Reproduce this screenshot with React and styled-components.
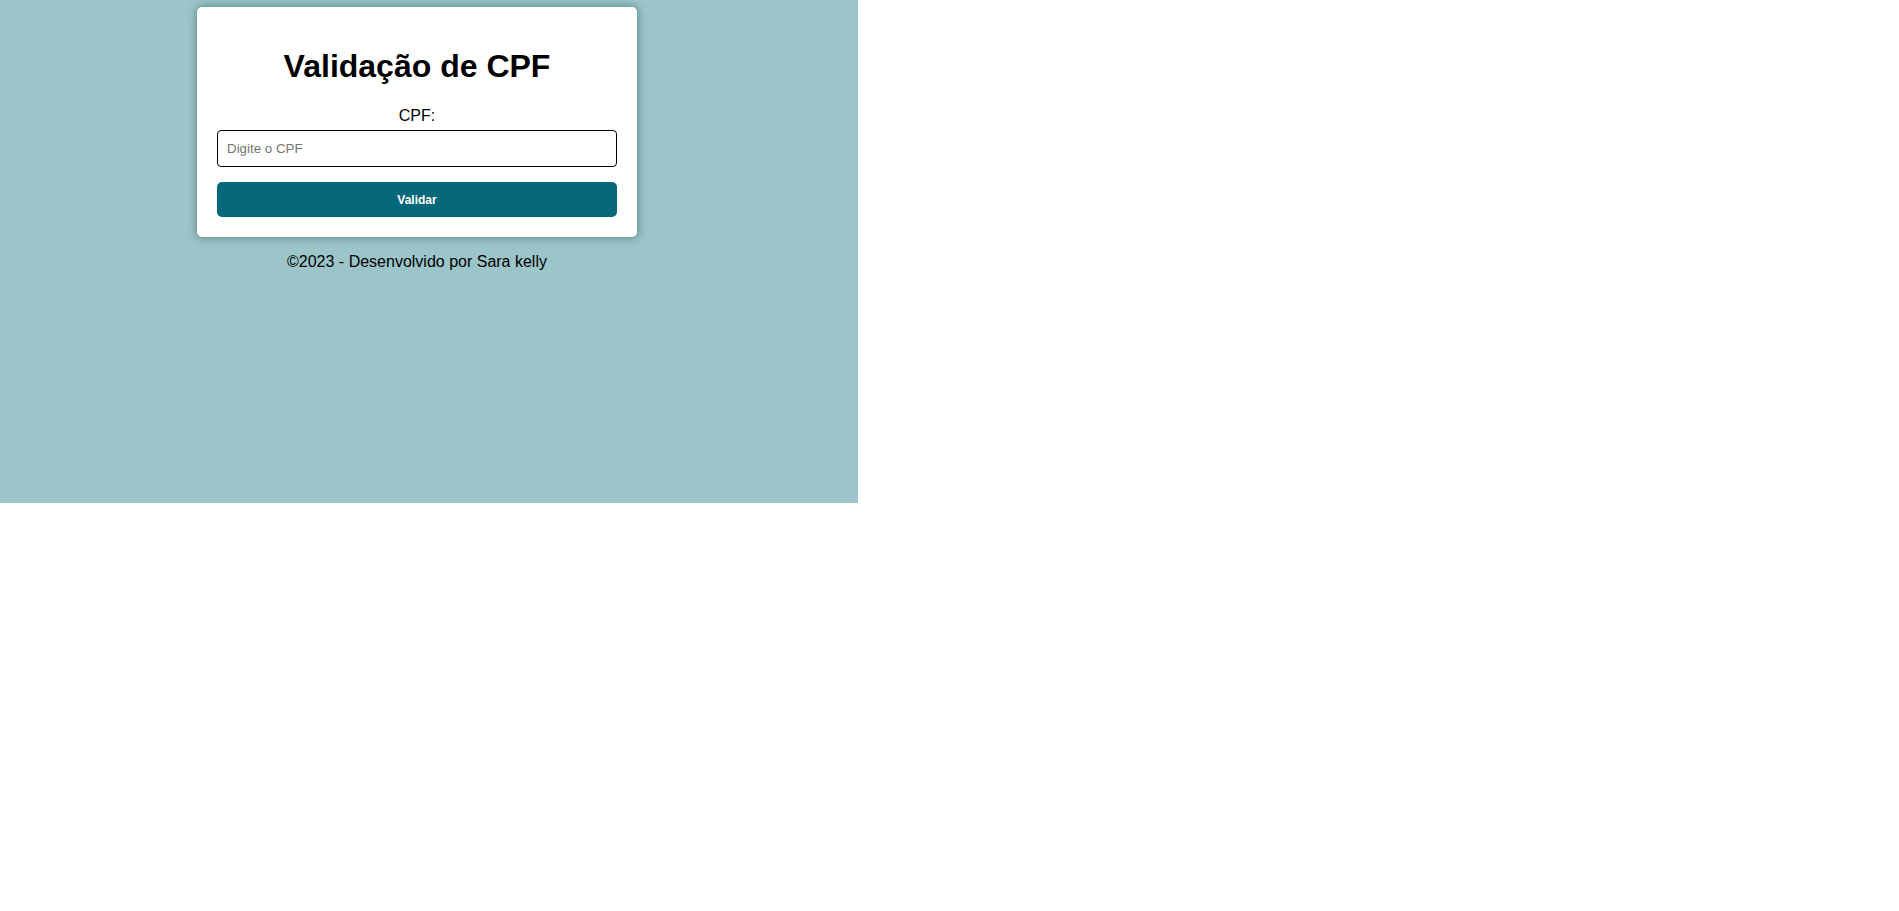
import React from 'react'
import styled, { createGlobalStyle } from 'styled-components'

const GlobalStyle = createGlobalStyle`
    body {
        margin: 0;
        background: #ffffff;
        font-family: "Liberation Sans", Arial, sans-serif;
    }
`

const Page = styled.div`
    width: 834px;
    height: 496px;
    padding: 7px 24px 0 0;
    background: #9bc5c8;
    display: flex;
    flex-direction: column;
    align-items: center;
`

const Card = styled.form`
    width: 400px;
    padding: 20px;
    background: #ffffff;
    border-radius: 5px;
    box-shadow: 0 0 10px rgba(0, 50, 60, 0.5);
`

const Title = styled.h1`
    margin: 21px 0 22px;
    font-size: 32px;
    font-weight: bold;
    text-align: center;
    color: #000;
`

const Label = styled.label`
    display: block;
    margin-bottom: 5px;
    font-size: 16px;
    text-align: center;
    color: #000;
`

const Input = styled.input`
    box-sizing: border-box;
    display: block;
    width: 100%;
    height: 37px;
    padding: 0 9px;
    border: 1px solid #000;
    border-radius: 4px;
    font-family: "Liberation Sans", Arial, sans-serif;
    font-size: 13.33px;
    outline: none;
    &::placeholder {
        color: #757575;
    }
`

const Button = styled.button`
    display: block;
    width: 100%;
    height: 35px;
    margin-top: 15px;
    border: none;
    border-radius: 5px;
    background: #05677a;
    color: #ffffff;
    font-family: "Liberation Sans", Arial, sans-serif;
    font-size: 12px;
    font-weight: bold;
    cursor: pointer;
`

const Footer = styled.p`
    margin: 16px 0 0;
    font-size: 16px;
    color: #000;
`

const App = () => {
    return (
        <>
            <GlobalStyle />
            <Page>
                <Card onSubmit={(e) => e.preventDefault()}>
                    <Title>Validação de CPF</Title>
                    <Label htmlFor='cpf'>CPF:</Label>
                    <Input id='cpf' type='text' placeholder='Digite o CPF' />
                    <Button type='submit'>Validar</Button>
                </Card>
                <Footer>©2023 - Desenvolvido por Sara kelly</Footer>
            </Page>
        </>
    )
}

export default App
